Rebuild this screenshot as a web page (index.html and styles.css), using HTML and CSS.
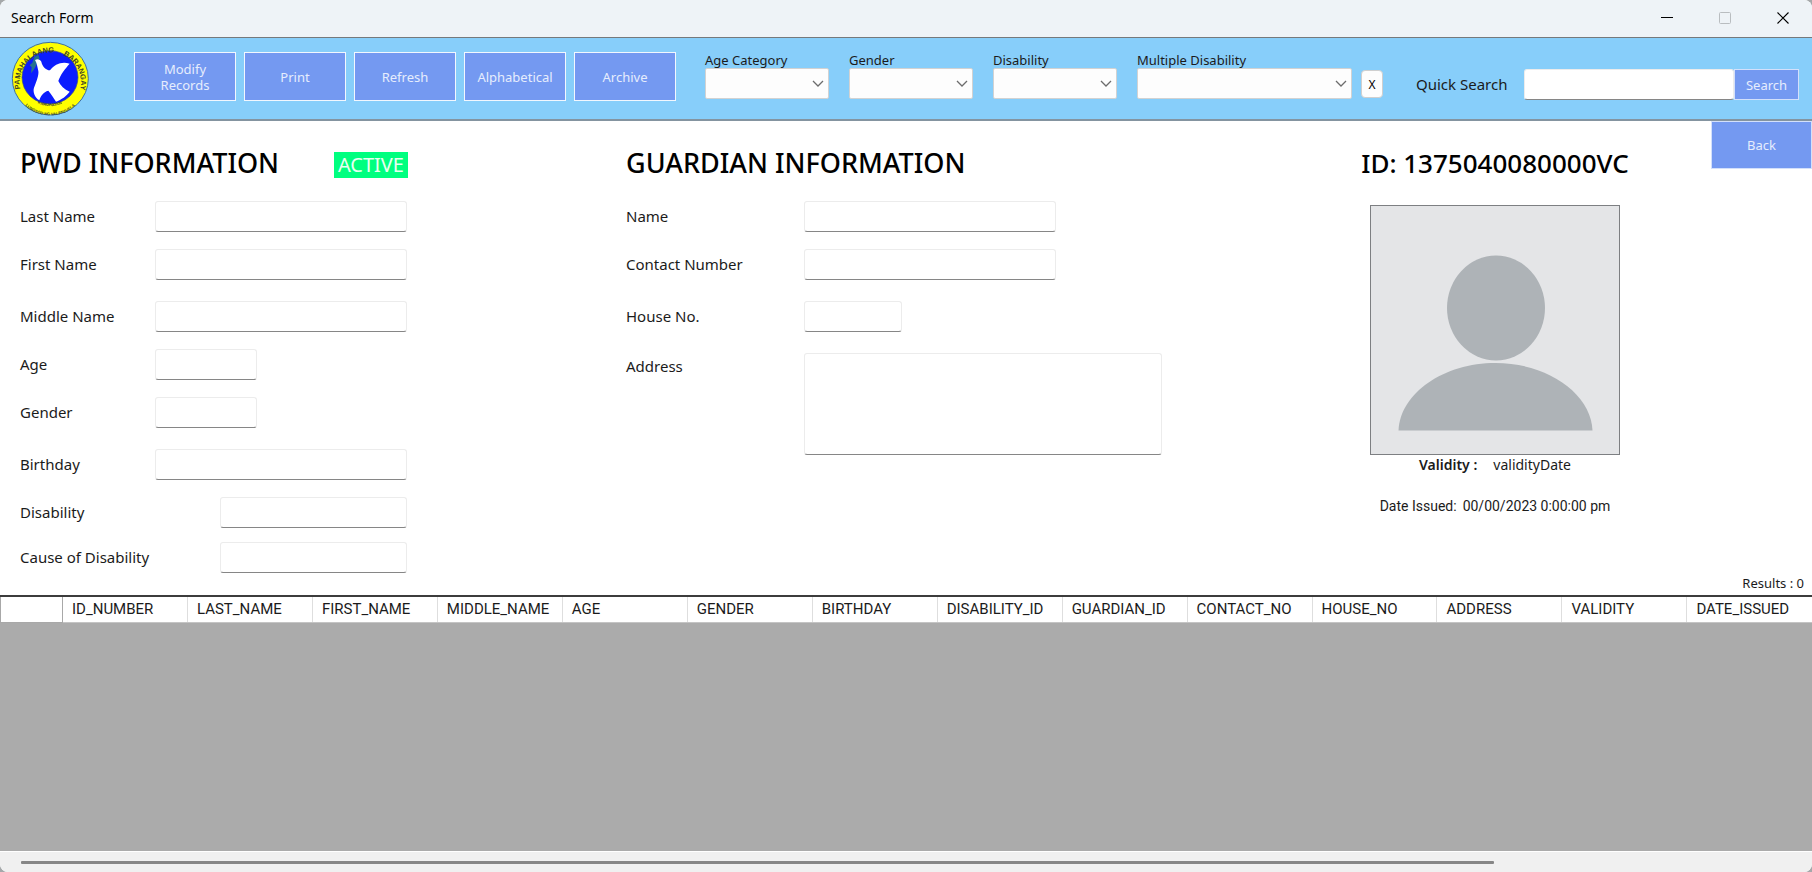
FILE: index.html
```html
<!DOCTYPE html>
<html lang="en">
<head>
<meta charset="utf-8">
<title>Search Form</title>
<link rel="stylesheet" href="styles.css">
</head>
<body>
<div class="window">
  <header class="titlebar">
    <span class="titlebar-text">Search Form</span>
    <div class="window-controls">
      <button class="window-button" type="button" aria-label="Minimize">
        <svg width="12" height="12" viewBox="0 0 12 12"><path d="M0 5.5h12" stroke="#000"/></svg>
      </button>
      <button class="window-button" type="button" aria-label="Maximize" disabled>
        <svg width="12" height="12" viewBox="0 0 12 12"><rect x=".5" y=".5" width="11" height="11" rx="1" fill="none" stroke="#b9bdc0"/></svg>
      </button>
      <button class="window-button" type="button" aria-label="Close">
        <svg width="12" height="12" viewBox="0 0 12 12"><path d="M.5 .5l11 11M11.5 .5l-11 11" stroke="#000" stroke-width="1.1"/></svg>
      </button>
    </div>
  </header>

  <div class="toolbar">
    <svg class="logo" viewBox="0 0 252 246" role="img" aria-label="Barangay seal">
      <defs>
        <path id="arc-top" d="M38 156 A92 90 0 1 1 216 156"/>
        <path id="arc-low" d="M54 166 A88 87 0 0 0 200 166"/>
        <path id="arc-edge" d="M26 164 A108 106 0 0 0 228 164"/>
      </defs>
      <ellipse cx="127" cy="122" rx="114" ry="109" fill="#ffff00" stroke="#3f6f9f" stroke-width="3"/>
      <ellipse cx="126" cy="118" rx="84" ry="80" fill="#0b1cff" stroke="#39507a" stroke-width="2"/>
      <path d="M79 56l12-6 4 12-8 8-2 12-8 14-8 10 2-18-6-6 8-8z" fill="#27718e"/>
      <path d="M81 66C88 61 97 64 100 71C103 85 113 96 126 97C139 78 163 69 185 77C172 91 156 112 151 129C157 143 169 154 185 161C176 174 160 185 144 191C137 180 130 169 121 158C106 162 98 174 94 187C80 178 74 161 78 149C86 129 93 111 91 99C88 87 87 76 81 66Z" fill="#fff"/>
      <g class="logo-text">
        <text font-size="22"><textPath href="#arc-top" startOffset="1%">PAMAHALAANG</textPath></text>
        <text font-size="22"><textPath href="#arc-top" startOffset="62%">BARANGAY</textPath></text>
        <text font-size="12"><textPath href="#arc-low" startOffset="27%">KARUHATAN</textPath></text>
        <text font-size="12"><textPath href="#arc-edge" startOffset="18%">LUNGSOD NG VALENZUELA</textPath></text>
      </g>
    </svg>

    <nav class="actions" aria-label="Record actions">
      <button class="button button-action" type="button">Modify Records</button>
      <button class="button button-action" type="button">Print</button>
      <button class="button button-action" type="button">Refresh</button>
      <button class="button button-action" type="button">Alphabetical</button>
      <button class="button button-action" type="button">Archive</button>
    </nav>

    <div class="filters">
      <div class="filter">
        <label for="age-category">Age Category</label>
        <div class="select-box">
          <select id="age-category"><option></option></select>
          <svg class="chevron" viewBox="0 0 12 8"><path d="M1 1l5 5 5-5" fill="none" stroke="#6c6c6c" stroke-width="1.3"/></svg>
        </div>
      </div>
      <div class="filter">
        <label for="filter-gender">Gender</label>
        <div class="select-box">
          <select id="filter-gender"><option></option></select>
          <svg class="chevron" viewBox="0 0 12 8"><path d="M1 1l5 5 5-5" fill="none" stroke="#6c6c6c" stroke-width="1.3"/></svg>
        </div>
      </div>
      <div class="filter">
        <label for="filter-disability">Disability</label>
        <div class="select-box">
          <select id="filter-disability"><option></option></select>
          <svg class="chevron" viewBox="0 0 12 8"><path d="M1 1l5 5 5-5" fill="none" stroke="#6c6c6c" stroke-width="1.3"/></svg>
        </div>
      </div>
      <div class="filter filter-wide">
        <label for="filter-multiple">Multiple Disability</label>
        <div class="select-box">
          <select id="filter-multiple"><option></option></select>
          <svg class="chevron" viewBox="0 0 12 8"><path d="M1 1l5 5 5-5" fill="none" stroke="#6c6c6c" stroke-width="1.3"/></svg>
        </div>
      </div>
    </div>
    <button class="clear-button" type="button">X</button>

    <form class="quick-search">
      <label for="quick-search">Quick Search</label>
      <input class="text-input" id="quick-search" type="text">
      <button class="button button-search" type="button">Search</button>
    </form>
  </div>

  <main class="details">
    <section class="panel">
      <div class="panel-heading">
        <h2>PWD INFORMATION</h2>
        <span class="status">ACTIVE</span>
      </div>
      <div class="field-groups pwd-fields">
        <div class="field-group">
          <div class="field"><label for="last-name">Last Name</label><input class="text-input" id="last-name" type="text"></div>
          <div class="field"><label for="first-name">First Name</label><input class="text-input" id="first-name" type="text"></div>
        </div>
        <div class="field-group">
          <div class="field"><label for="middle-name">Middle Name</label><input class="text-input" id="middle-name" type="text"></div>
          <div class="field"><label for="age">Age</label><input class="text-input input-short" id="age" type="text"></div>
          <div class="field"><label for="gender">Gender</label><input class="text-input input-short" id="gender" type="text"></div>
        </div>
        <div class="field-group">
          <div class="field"><label for="birthday">Birthday</label><input class="text-input" id="birthday" type="text"></div>
          <div class="field field-long-label"><label for="disability">Disability</label><input class="text-input" id="disability" type="text"></div>
        </div>
        <div class="field-group field-group-close">
          <div class="field field-long-label"><label for="cause">Cause of Disability</label><input class="text-input" id="cause" type="text"></div>
        </div>
      </div>
    </section>

    <section class="panel">
      <div class="panel-heading"><h2>GUARDIAN INFORMATION</h2></div>
      <div class="field-groups guardian-fields">
        <div class="field-group">
          <div class="field"><label for="guardian-name">Name</label><input class="text-input" id="guardian-name" type="text"></div>
          <div class="field"><label for="contact">Contact Number</label><input class="text-input" id="contact" type="text"></div>
        </div>
        <div class="field-group">
          <div class="field"><label for="house">House No.</label><input class="text-input input-short" id="house" type="text"></div>
        </div>
        <div class="field-group">
          <div class="field field-area"><label for="address">Address</label><textarea class="text-input" id="address"></textarea></div>
        </div>
      </div>
    </section>

    <section class="panel id-card">
      <div class="panel-heading"><h2>ID: 1375040080000VC</h2></div>
      <svg class="photo" viewBox="0 0 250 250" role="img" aria-label="No photo">
        <rect x=".5" y=".5" width="249" height="249" fill="#e4e5e7" stroke="#7d7f82"/>
        <ellipse cx="126" cy="103" rx="49" ry="52.5" fill="#aeb3b7"/>
        <path d="M28.500 225.500C30 188 74 158 125.500 158S221 188 222.500 225.500Z" fill="#aeb3b7"/>
      </svg>
      <p class="validity"><strong>Validity :</strong><span>validityDate</span></p>
      <p class="issued"><span>Date Issued:</span><span>00/00/2023 0:00:00 pm</span></p>
    </section>

    <div class="side">
      <button class="button button-back" type="button">Back</button>
      <p class="results">Results : 0</p>
    </div>
  </main>

  <div class="grid-area">
    <table class="records">
      <thead>
        <tr>
          <th class="row-header" aria-label="Row"></th>
          <th>ID_NUMBER</th><th>LAST_NAME</th><th>FIRST_NAME</th><th>MIDDLE_NAME</th><th>AGE</th><th>GENDER</th><th>BIRTHDAY</th><th>DISABILITY_ID</th><th>GUARDIAN_ID</th><th>CONTACT_NO</th><th>HOUSE_NO</th><th>ADDRESS</th><th>VALIDITY</th><th>DATE_ISSUED</th>
        </tr>
      </thead>
    </table>
  </div>
  <div class="scrollbar"><div class="scrollbar-thumb"></div></div>
</div>
</body>
</html>
```

FILE: styles.css
```css
* {
  box-sizing: border-box;
}

body {
  margin: 0;
  background: #a5a8aa;
  color: #1b1b1b;
  font-family: "Noto Sans", "Open Sans", sans-serif;
}

h2,
p {
  margin: 0;
}

button,
input,
select,
textarea {
  font-family: inherit;
}

.window {
  display: flex;
  flex-direction: column;
  min-height: 100vh;
  border-radius: 8px;
  overflow: hidden;
  background: #fff;
}

/* Title bar */
.titlebar {
  display: flex;
  align-items: center;
  justify-content: space-between;
  height: 38px;
  padding: 0 6px 2px 11px;
  border-bottom: 1px solid #75797c;
  background: #eef3f7;
  color: #000;
  font-size: 14px;
}

.window-controls {
  display: flex;
  gap: 12px;
}

.window-button {
  display: grid;
  place-items: center;
  width: 46px;
  height: 30px;
  padding: 0;
  border: 0;
  background: none;
}

/* Toolbar */
.toolbar {
  display: flex;
  align-items: flex-start;
  height: 83px;
  padding: 0 13px 0 8px;
  border-bottom: 2px solid #8494a0;
  background: #87cefa;
}

.logo {
  flex: none;
  width: 84px;
  height: 82px;
}

.logo-text {
  fill: #3e4425;
  font-family: "Liberation Sans", sans-serif;
  font-weight: 700;
}

.actions {
  display: flex;
  flex: none;
  gap: 8px;
  margin: 14px 29px 0 42px;
}

.button {
  border: 1px solid #d3e0fb;
  background: #7499f1;
  color: #e6edfd;
  font-size: 13px;
  line-height: 16px;
}

.button-action {
  width: 102px;
  height: 49px;
  padding: 0 8px;
  border: 1px solid #f2f7fe;
  display: grid;
  place-items: center;
}

.filters {
  display: flex;
  flex: none;
  align-items: flex-end;
  gap: 20px;
  margin-top: 14px;
}

.filter {
  width: 124px;
  font-size: 13px;
  line-height: 16px;
}

.filter-wide {
  width: 215px;
}

.select-box {
  display: grid;
  align-items: center;
}

.select-box > * {
  grid-area: 1 / 1;
}

.select-box select {
  appearance: none;
  width: 100%;
  height: 31px;
  border: 1px solid #d2d2d2;
  border-radius: 2px;
  background: #fdfdfd;
}

.chevron {
  justify-self: end;
  width: 12px;
  height: 8px;
  margin-right: 5px;
  pointer-events: none;
}

.clear-button {
  flex: none;
  width: 22px;
  height: 28px;
  margin: 32px 0 0 9px;
  padding: 0;
  border: 1px solid #cfcfcf;
  border-radius: 4px;
  background: #fdfdfd;
  font-size: 12px;
}

.quick-search {
  display: flex;
  align-items: center;
  flex: 1;
  min-width: 0;
  margin: 31px 0 0 33px;
  font-size: 15px;
}

.quick-search label {
  flex: none;
  width: 108px;
  padding-bottom: 1px;
  white-space: nowrap;
}

.quick-search .text-input {
  flex: 1;
  min-width: 0;
}

.button-search {
  flex: none;
  width: 65px;
  height: 31px;
  padding: 0;
}

/* Shared text boxes */
.text-input {
  height: 31px;
  padding: 4px 6px;
  border: 1px solid #ececec;
  border-bottom: 1px solid #868686;
  border-radius: 3px;
  background: #fff;
  font-size: 15px;
}

/* Details */
.details {
  display: grid;
  grid-template-columns: 606fr 718fr 302px 166fr;
  min-height: 474px;
  padding-left: 20px;
}

.panel-heading {
  display: flex;
  align-items: center;
  height: 40px;
  margin: 22px 0 18px;
}

.panel-heading h2 {
  color: #000;
  font-size: 27px;
  font-weight: 500;
  line-height: 40px;
  white-space: nowrap;
}

.panel:first-child .panel-heading {
  justify-content: space-between;
  width: 388px;
}

.status {
  margin-top: 4px;
  padding: 0 4px;
  background: #00ff7f;
  color: #e9fff2;
  font-size: 20px;
  line-height: 26px;
}

.field-groups {
  display: flex;
  flex-direction: column;
  gap: 21px;
}

.field-group {
  display: flex;
  flex-direction: column;
  gap: 17px;
}

.field-group-close {
  margin-top: -7px;
}

.field {
  display: grid;
  align-items: center;
  font-size: 15px;
}

.field label {
  padding-bottom: 2px;
}

.pwd-fields .field {
  grid-template-columns: 135px 252px;
}

.pwd-fields .field-long-label {
  grid-template-columns: 200px 187px;
}

.guardian-fields .field {
  grid-template-columns: 178px 252px;
}

.guardian-fields .field-area {
  grid-template-columns: 178px 358px;
  align-items: start;
  line-height: 26px;
}

.input-short {
  width: 102px;
}

.guardian-fields .input-short {
  width: 98px;
}

textarea.text-input {
  height: 102px;
  resize: none;
}

.id-card {
  display: flex;
  flex-direction: column;
  align-items: center;
}

.id-card .panel-heading {
  margin-bottom: 22px;
}

.id-card .panel-heading h2 {
  font-size: 26px;
}

.photo {
  width: 250px;
  height: 250px;
}

.validity,
.issued {
  display: flex;
  line-height: 20px;
  white-space: nowrap;
}

.validity {
  gap: 16px;
  font-size: 14px;
}

.validity strong {
  font-weight: 600;
}

.issued {
  gap: 6px;
  margin-top: 21px;
  font-family: Roboto, sans-serif;
  font-size: 14px;
}

.side {
  display: flex;
  flex-direction: column;
  align-items: flex-end;
  justify-content: space-between;
}

.button-back {
  width: 101px;
  height: 48px;
}

.results {
  padding-right: 8px;
  font-size: 13px;
  line-height: 24px;
}

/* Records */
.grid-area {
  flex: 1;
  border-top: 2px solid #3c3c3c;
  background: #ababab;
}

.records {
  width: 100%;
  table-layout: fixed;
  border-collapse: collapse;
  background: #fff;
}

.records th {
  height: 25px;
  padding: 0 0 0 9px;
  border-left: 1px solid #dedede;
  border-bottom: 1px solid #c4c4c4;
  font-family: Roboto, sans-serif;
  font-size: 15px;
  font-weight: 400;
  line-height: 20px;
  text-align: left;
  white-space: nowrap;
}

.records .row-header {
  width: 62px;
  border-color: #a8a8a8;
  border-right: 1px solid #a8a8a8;
}

.scrollbar {
  height: 21px;
  padding: 9px 318px 0 21px;
  border-top: 1px solid #fff;
  background: #f0f0f0;
}

.scrollbar-thumb {
  height: 3px;
  border-radius: 1px;
  background: #868686;
}
```
